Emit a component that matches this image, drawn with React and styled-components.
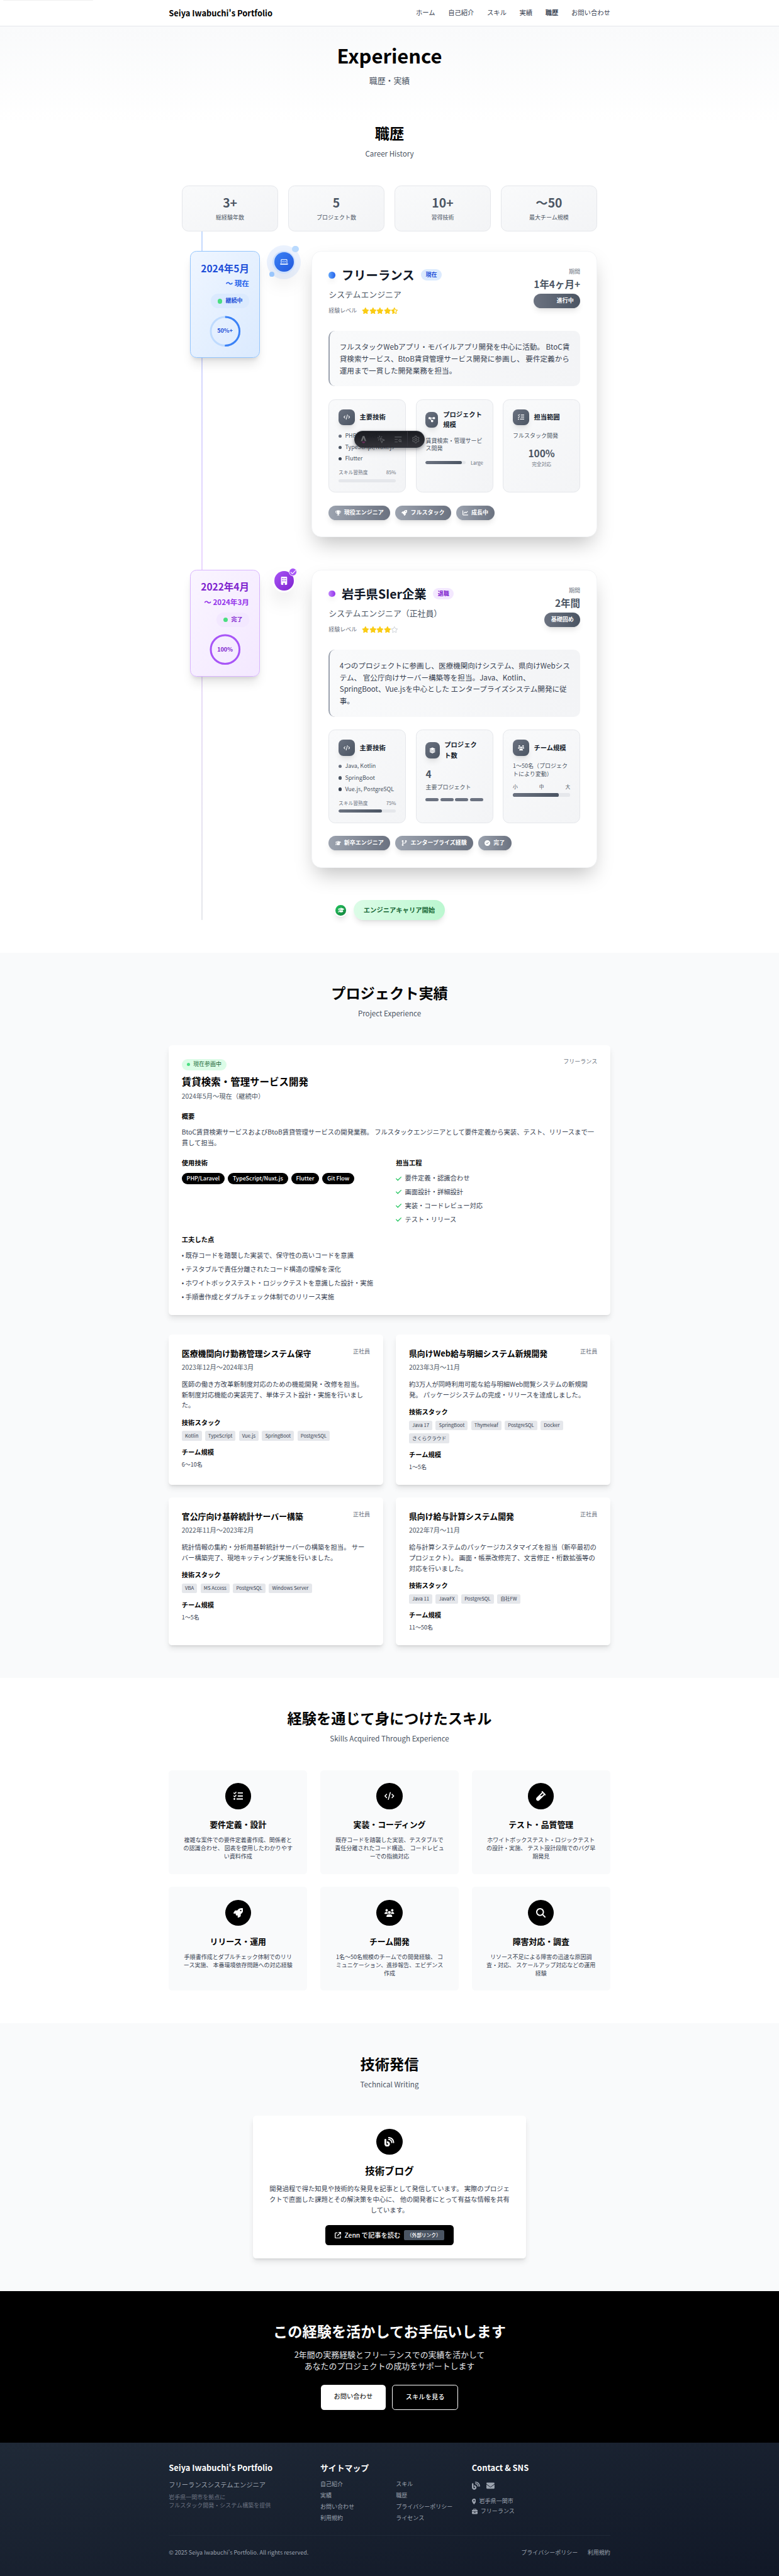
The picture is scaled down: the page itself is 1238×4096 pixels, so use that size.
import React from "react";
import styled, { createGlobalStyle, css } from "styled-components";
import {
  FaArrowUpRightFromSquare,
  FaBlog,
  FaBriefcase,
  FaBuilding,
  FaChartLine,
  FaCheck,
  FaCircleCheck,
  FaCode,
  FaCodeBranch,
  FaDiagramProject,
  FaEnvelope,
  FaGraduationCap,
  FaLaptopCode,
  FaLayerGroup,
  FaListCheck,
  FaLocationDot,
  FaMagnifyingGlass,
  FaRegStar,
  FaRocket,
  FaStar,
  FaStarHalfStroke,
  FaTrophy,
  FaUsers,
  FaVial,
} from "react-icons/fa6";
import { MousePointerClick, Settings, TextSearch } from "lucide-react";

/* 1rem is ten design pixels */
const GlobalStyle = createGlobalStyle`
  *, *::before, *::after { box-sizing: border-box; }
  html { font-size: 6.4482px; }
  body {
    margin: 0;
    background: #fff;
    color: #111827;
    font-family: "Noto Sans CJK JP", "Noto Sans", sans-serif;
    font-size: 1.6rem;
    line-height: 1.625;
    overflow-x: hidden;
  }
  h1, h2, h3, h4, p, ul { margin: 0; padding: 0; }
  ul { list-style: none; }
  svg { display: block; flex-shrink: 0; }
`;

const tones = {
  blue: {
    soft: "#eff6ff", tint: "#dbeafe", edge: "#93c5fd", text: "#1d4ed8", sub: "#2563eb",
    main: "#3b82f6", light: "#60a5fa", deep: "#1d4ed8", track: "#bfdbfe",
  },
  purple: {
    soft: "#faf5ff", tint: "#f3e8ff", edge: "#d8b4fe", text: "#7e22ce", sub: "#9333ea",
    main: "#a855f7", light: "#c084fc", deep: "#7e22ce", track: "#e9d5ff",
  },
};

const shadowMd = "0 0.4rem 0.6rem -0.1rem rgba(0,0,0,.1), 0 0.2rem 0.4rem -0.2rem rgba(0,0,0,.1)";
const shadowLg = "0 1rem 1.5rem -0.3rem rgba(0,0,0,.1), 0 0.4rem 0.6rem -0.4rem rgba(0,0,0,.1)";
const shadowXl = "0 2rem 2.5rem -0.5rem rgba(0,0,0,.1), 0 0.8rem 1rem -0.6rem rgba(0,0,0,.1)";
const shadow2xl = "0 2.5rem 5rem -1.2rem rgba(0,0,0,.25)";

const t12 = css`font-size: 1.2rem; line-height: 1.6rem;`;
const t14 = css`font-size: 1.4rem; line-height: 2rem;`;
const t18 = css`font-size: 1.8rem; line-height: 2.8rem;`;
const t20 = css`font-size: 2rem; line-height: 2.8rem;`;
const t24 = css`font-size: 2.4rem; line-height: 3.2rem;`;
const t30 = css`font-size: 3rem; line-height: 3.6rem;`;

/* ---------- page frame ---------- */
const Page = styled.div`
  position: relative;
  overflow: hidden;
`;
const SkipLinkEdge = styled.div`
  position: absolute;
  left: 0.8rem;
  top: 0;
  width: 22.1rem;
  height: 0.2rem;
  border-radius: 0 0 0.4rem 0.4rem;
  background: #f0f0f0;
  box-shadow: ${shadowMd};
`;
const Container = styled.div`
  width: 115.2rem;
  margin: 0 auto;
  padding: 0 3.2rem;
`;
const Header = styled.header`
  height: 6.5rem;
  border-bottom: 1px solid #e5e7eb;
  background: #fff;
`;
const HeaderRow = styled(Container)`
  height: 6.4rem;
  display: flex;
  align-items: center;
  justify-content: space-between;
`;
const Logo = styled.span`
  ${t20}
  font-weight: 700;
  color: #000;
`;
const Nav = styled.nav`
  display: flex;
  gap: 3.2rem;
`;
const NavLink = styled.span`
  color: #374151;
  font-weight: ${(p) => (p.$active ? 700 : 400)};
`;
const TopArea = styled.div`
  background: linear-gradient(to bottom, #f9fafb 0, #fff 24rem);
`;
const Hero = styled.section`
  height: 16.4rem;
  padding-top: 4.8rem;
  text-align: center;
`;
const HeroTitle = styled.h1`
  font-size: 4.8rem;
  line-height: 1;
  font-weight: 700;
  color: #000;
`;
const HeroSub = styled.p`
  ${t20}
  margin-top: 2.4rem;
  color: #4b5563;
`;
const Section = styled.section`
  height: ${(p) => p.$h};
  padding: 8rem 0;
  background: ${(p) => p.$bg || "transparent"};
`;
const SectionHead = styled.div`
  text-align: center;
  height: 8.4rem;
  margin-bottom: 6.4rem;
`;
const SectionTitle = styled.h2`
  font-size: 3.6rem;
  line-height: 4rem;
  font-weight: 700;
  color: ${(p) => p.$color || "#000"};
`;
const SectionSub = styled.p`
  ${t18}
  margin-top: 1.6rem;
  color: #4b5563;
`;

/* ---------- career ---------- */
const Career = styled.div`
  position: relative;
  width: 102.4rem;
  height: 181.2rem;
  margin: 0 auto;
`;
const TimelineLine = styled.div`
  position: absolute;
  left: 4.8rem;
  top: 0;
  bottom: 0;
  width: 0.4rem;
  border-radius: 0.4rem;
  background: linear-gradient(to bottom, #bfdbfe, #e9d5ff, #e5e7eb);
`;
const StatGrid = styled.div`
  position: relative;
  display: grid;
  grid-template-columns: repeat(4, 1fr);
  gap: 2.4rem;
  margin-bottom: 4.75rem;
`;
const StatCard = styled.div`
  height: 11.4rem;
  padding-top: 2.4rem;
  text-align: center;
  border: 1px solid #e5e7eb;
  border-radius: 1.6rem;
  background: linear-gradient(to bottom right, #f9fafb, #f3f4f6);
`;
const StatValue = styled.div`
  ${t30}
  font-weight: 700;
  color: #4b5563;
`;
const StatLabel = styled.div`
  ${t14}
  margin-top: 0.8rem;
  color: #4b5563;
`;
const Item = styled.article`
  position: relative;
  display: flex;
  align-items: flex-start;
  height: ${(p) => p.$h};
  margin-bottom: 8rem;
`;
const DateCol = styled.div`
  width: 19.2rem;
  display: flex;
  justify-content: flex-end;
`;
const DateCard = styled.div`
  display: flex;
  flex-direction: column;
  align-items: flex-end;
  height: 26.4rem;
  width: 17.1rem;
  padding: calc(2.6rem - 1px);
  border: 1px solid ${(p) => p.$t.edge};
  border-radius: 1.6rem;
  background: linear-gradient(to bottom right, ${(p) => p.$t.soft}, ${(p) => p.$t.tint});
  box-shadow: ${shadowXl};
  white-space: nowrap;
`;
const DateStart = styled.div`
  ${t24}
  font-weight: 700;
  color: ${(p) => p.$t.text};
`;
const DateEnd = styled.div`
  ${t18}
  margin-top: 0.8rem;
  font-weight: 600;
  color: ${(p) => p.$t.sub};
`;
const DateStatus = styled.div`
  ${t14}
  display: flex;
  align-items: center;
  gap: 0.8rem;
  margin-top: 1.2rem;
  padding: 0.8rem 1.6rem;
  border-radius: 2rem;
  font-weight: 700;
  color: ${(p) => p.$t.text};
  background: ${(p) => p.$t.tint};
`;
const GreenDot = styled.i`
  width: ${(p) => p.$size};
  height: ${(p) => p.$size};
  border-radius: 50%;
  background: #4ade80;
`;
const RingBox = styled.div`
  display: grid;
  place-items: center;
  align-self: center;
  width: 8rem;
  height: 8rem;
  margin-top: 1.6rem;
  svg, span { grid-area: 1 / 1; }
  svg { width: 100%; height: 100%; transform: rotate(-90deg); }
`;
const RingText = styled.span`
  ${t14}
  font-weight: 700;
  color: ${(p) => p.$t.text};
`;
const IconCol = styled.div`
  width: 12.8rem;
  padding-left: 3.2rem;
`;
const Marker = styled.div`
  position: relative;
  display: flex;
  align-items: center;
  justify-content: center;
  width: 5.6rem;
  height: 5.6rem;
  border-radius: 50%;
  background: ${(p) => p.$ring};
  box-shadow: ${shadow2xl};
`;
const MarkerCore = styled.div`
  position: relative;
  display: flex;
  align-items: center;
  justify-content: center;
  width: 4.8rem;
  height: 4.8rem;
  border-radius: 50%;
  font-size: 2rem;
  color: ${(p) => p.$ink};
  background: linear-gradient(to bottom right, ${(p) => p.$t.main}, ${(p) => p.$t.deep});
`;
const Halo = styled.div`
  position: absolute;
  inset: -1.4rem;
  border-radius: 50%;
  background: rgba(59, 130, 246, 0.1);
`;
const Orbit = styled.div`
  position: absolute;
  border-radius: 50%;
  width: ${(p) => p.$size};
  height: ${(p) => p.$size};
  ${(p) => p.$place}
`;
const MarkerCheck = styled.div`
  position: absolute;
  right: -0.4rem;
  top: -0.4rem;
  width: 2rem;
  height: 2rem;
  display: flex;
  align-items: center;
  justify-content: center;
  border: 0.2rem solid #fff;
  border-radius: 50%;
  background: #a855f7;
  color: #fff;
  font-size: 1.5rem;
`;
const JobCard = styled.div`
  width: 70.4rem;
  height: 100%;
  padding: calc(4.2rem - 1px);
  border: 1px solid #f3f4f6;
  border-radius: 2.4rem;
  background: #fff;
  box-shadow: ${shadow2xl};
`;
const JobTop = styled.div`
  display: flex;
  justify-content: space-between;
  height: 11.6rem;
`;
const JobTitleRow = styled.div`
  display: flex;
  align-items: center;
  gap: 1.6rem;
`;
const TitleDot = styled.i`
  width: 1.6rem;
  height: 1.6rem;
  border-radius: 50%;
  background: linear-gradient(to right, ${(p) => p.$t.light}, ${(p) => p.$t.sub});
  box-shadow: ${shadowLg};
`;
const JobTitle = styled.h3`
  ${t30}
  font-weight: 700;
  color: #111827;
`;
const JobBadge = styled.span`
  ${t14}
  padding: 0.4rem 1.2rem;
  border-radius: 1.4rem;
  font-weight: 700;
  color: ${(p) => p.$t.text};
  background: ${(p) => p.$t.tint};
`;
const JobRole = styled.p`
  ${t20}
  margin-top: 1.6rem;
  color: #4b5563;
`;
const LevelRow = styled.div`
  ${t14}
  display: flex;
  align-items: center;
  gap: 1.2rem;
  margin-top: 1.6rem;
  color: #6b7280;
`;
const Stars = styled.span`
  display: flex;
  font-size: 1.6rem;
  color: #facc15;
  svg { width: 1.8rem; height: 1.6rem; }
`;
const EmptyStar = styled(FaRegStar)`
  color: #d1d5db;
`;
const Period = styled.div`
  display: flex;
  flex-direction: column;
  text-align: right;
`;
const PeriodLabel = styled.div`
  ${t14}
  color: #6b7280;
`;
const PeriodValue = styled.div`
  ${t24}
  margin-top: 0.4rem;
  font-weight: 700;
  color: #4b5563;
`;
const PeriodPill = styled.div`
  ${t14}
  margin-top: 0.8rem;
  padding: 0.8rem 1.6rem;
  border-radius: 2rem;
  font-weight: 700;
  color: #fff;
  background: linear-gradient(to right, #6b7280, #4b5563);
  box-shadow: ${shadowLg};
`;
const Summary = styled.p`
  margin-top: 4rem;
  padding: 2.4rem;
  border-left: 0.4rem solid #9ca3af;
  border-radius: 1.6rem;
  background: linear-gradient(to right, #f9fafb, #f3f4f6);
  font-size: 1.8rem;
  line-height: 2.925rem;
  color: #374151;
`;
const DetailGrid = styled.div`
  display: grid;
  grid-template-columns: repeat(3, 1fr);
  gap: 2.4rem;
  margin: 3.2rem 0;
`;
const Detail = styled.div`
  min-width: 0;
  height: 23rem;
  padding: calc(2.5rem - 1px) calc(2.45rem - 1px);
  border: 1px solid #e5e7eb;
  border-radius: 1.6rem;
  background: linear-gradient(to bottom right, #f9fafb, #f3f4f6);
`;
const DetailHead = styled.div`
  display: flex;
  align-items: center;
  gap: 1.2rem;
  margin-bottom: 1.6rem;
`;
const DetailIcon = styled.div`
  display: flex;
  align-items: center;
  justify-content: center;
  width: 4rem;
  height: 4rem;
  border-radius: 1.2rem;
  color: #fff;
  font-size: 1.6rem;
  background: linear-gradient(to bottom right, #6b7280, #4b5563);
  box-shadow: ${shadowLg};
`;
const DetailTitle = styled.h4`
  font-size: 1.6rem;
  line-height: 2.6rem;
  font-weight: 700;
  color: #111827;
`;
const BulletList = styled.ul`
  display: flex;
  flex-direction: column;
  gap: 0.8rem;
  margin-bottom: 1.6rem;
`;
const Bullet = styled.li`
  ${t14}
  display: flex;
  align-items: center;
  gap: 0.8rem;
  color: #4b5563;
  white-space: nowrap;
  &::before {
    content: "";
    flex: none;
    width: 0.8rem;
    height: 0.8rem;
    border-radius: 50%;
    background: ${(p) => p.$dot};
  }
`;
const SmallRow = styled.div`
  ${t12}
  display: flex;
  align-items: center;
  justify-content: space-between;
  gap: 1.2rem;
  color: ${(p) => p.$color || "#6b7280"};
`;
const Bar = styled.div`
  flex: 1;
  height: 0.8rem;
  margin-top: ${(p) => (p.$spaced ? "0.8rem" : 0)};
  border-radius: 0.4rem;
  overflow: hidden;
  background: #e5e7eb;
`;
const BarFill = styled.div`
  width: ${(p) => p.$value}%;
  height: 100%;
  border-radius: 0.4rem;
  background: linear-gradient(to right, #6b7280, #4b5563);
`;
const DetailText = styled.p`
  ${t14}
  margin-top: ${(p) => p.$top || 0};
  margin-bottom: ${(p) => p.$gap || "1.6rem"};
  color: #4b5563;
`;
const BigNumber = styled.div`
  ${t24}
  font-weight: 700;
  color: #4b5563;
  text-align: ${(p) => (p.$center ? "center" : "left")};
`;
const BigCaption = styled.div`
  ${t12}
  margin-top: 0.4rem;
  text-align: center;
  color: #6b7280;
`;
const Segments = styled.div`
  display: grid;
  grid-template-columns: repeat(4, 1fr);
  gap: 0.4rem;
  i { height: 0.8rem; border-radius: 0.4rem; background: #6b7280; }
`;
const BadgeRow = styled.div`
  display: flex;
  gap: 1.2rem;
`;
const Badge = styled.span`
  ${t14}
  display: flex;
  align-items: center;
  gap: 0.8rem;
  padding: 0.8rem 1.6rem;
  border-radius: 2rem;
  font-weight: 700;
  color: #fff;
  background: linear-gradient(to right, #9ca3af, #6b7280);
  box-shadow: ${shadowLg};
`;
const StartRow = styled.div`
  position: relative;
  display: flex;
  align-items: center;
  justify-content: center;
  gap: 1.6rem;
`;
const StartIcon = styled.div`
  display: flex;
  align-items: center;
  justify-content: center;
  width: 3.2rem;
  height: 3.2rem;
  border: 0.4rem solid #fff;
  border-radius: 50%;
  background: linear-gradient(to bottom right, #22c55e, #15803d);
  box-shadow: ${shadowLg};
  color: #fff;
  font-size: 1.6rem;
`;
const StartPill = styled.div`
  padding: 1.2rem 2.4rem;
  border-radius: 2.5rem;
  font-weight: 700;
  color: #166534;
  background: linear-gradient(to right, #dcfce7, #bbf7d0);
  box-shadow: ${shadowLg};
`;

/* ---------- floating toolbar ---------- */
const Toolbar = styled.div`
  position: absolute;
  left: 87.3rem;
  top: 106.2rem;
  width: 17.45rem;
  height: 4.2rem;
  display: grid;
  grid-template-columns: repeat(4, 1fr);
  border: 1px solid rgba(52, 56, 65, 0.9);
  border-radius: 2.1rem;
  overflow: hidden;
  color: #5a5c60;
  background: linear-gradient(to bottom, rgba(19, 21, 26, 0.97), rgba(44, 44, 50, 0.97));
`;
const ToolbarShadow = styled.div`
  position: absolute;
  left: 87.3rem;
  top: 106.2rem;
  width: 17.45rem;
  height: 4.2rem;
  border-radius: 2.1rem;
  box-shadow: 0 0.3rem 0.8rem rgba(19, 21, 26, 0.35), 0 0.8rem 1.6rem rgba(19, 21, 26, 0.15);
`;
const ToolCell = styled.div`
  display: flex;
  align-items: center;
  justify-content: center;
  border-left: ${(p) => (p.$split ? "1px solid #36363e" : "0")};
  svg { width: 2.1rem; height: 2.1rem; }
`;

/* ---------- projects ---------- */
const panel = css`
  border-radius: 0.8rem;
  background: #fff;
  box-shadow: ${shadowLg};
`;
const FeaturePanel = styled.article`
  ${panel}
  height: 66.6rem;
  padding: 3.2rem;
  margin-bottom: 4.8rem;
`;
const SplitRow = styled.div`
  display: flex;
  justify-content: space-between;
  align-items: flex-start;
`;
const LiveTag = styled.span`
  ${t14}
  display: inline-flex;
  align-items: center;
  gap: 0.8rem;
  margin: 0.2rem 0 1.2rem;
  padding: 0.4rem 1.2rem;
  border-radius: 1.4rem;
  color: #166534;
  background: #dcfce7;
`;
const Kind = styled.span`
  ${t14}
  color: #6b7280;
  white-space: nowrap;
`;
const FeatureTitle = styled.h3`
  ${t24}
  font-weight: 700;
  color: #000;
`;
const DateText = styled.p`
  margin-top: 0.8rem;
  color: #4b5563;
`;
const SubHead = styled.h4`
  font-size: 1.6rem;
  line-height: 2.6rem;
  font-weight: 700;
  margin: ${(p) => p.$m || "0 0 1.2rem"};
  color: #000;
`;
const BodyText = styled.p`
  color: #374151;
  margin-top: ${(p) => p.$top || 0};
`;
const TwoCol = styled.div`
  display: grid;
  grid-template-columns: 1fr 1fr;
  gap: 3.2rem;
  margin: 2.4rem 0;
`;
const TagRow = styled.div`
  display: flex;
  flex-wrap: wrap;
  gap: 0.8rem;
`;
const DarkTag = styled.span`
  ${t14}
  padding: 0.4rem 1.2rem;
  border-radius: 1.4rem;
  font-weight: 500;
  color: #fff;
  background: #000;
`;
const GrayTag = styled.span`
  ${t12}
  padding: 0.4rem 0.8rem;
  border-radius: 0.4rem;
  color: #374151;
  background: #e5e7eb;
`;
const Lines = styled.ul`
  display: flex;
  flex-direction: column;
  gap: 0.8rem;
  color: #374151;
`;
const CheckLine = styled.li`
  display: flex;
  align-items: center;
  gap: 0.8rem;
  svg { color: #22c55e; width: 1.4rem; height: 1.6rem; }
`;
const ProjectGrid = styled.div`
  display: grid;
  grid-template-columns: 1fr 1fr;
  grid-template-rows: 37rem 36.4rem;
  gap: 3.2rem;
`;
const Project = styled.article`
  ${panel}
  padding: 3.2rem;
`;
const ProjectTitle = styled.h3`
  ${t20}
  font-weight: 700;
  color: #000;
`;
const TeamSize = styled.p`
  ${t14}
  color: #374151;
`;

/* ---------- skills & writing ---------- */
const SkillGrid = styled.div`
  display: grid;
  grid-template-columns: repeat(3, 1fr);
  gap: 3.2rem;
`;
const Skill = styled.div`
  height: 25.6rem;
  padding: 3.2rem;
  border-radius: 0.8rem;
  text-align: center;
  background: #f9fafb;
`;
const RoundIcon = styled.div`
  display: flex;
  align-items: center;
  justify-content: center;
  width: 6.4rem;
  height: 6.4rem;
  margin: 0 auto 2.4rem;
  border-radius: 50%;
  font-size: 2.4rem;
  color: #fff;
  background: #000;
`;
const SkillText = styled.p`
  ${t14}
  margin-top: 1.6rem;
  color: #374151;
`;
const BlogCard = styled.div`
  ${panel}
  display: flex;
  flex-direction: column;
  align-items: center;
  width: 67.2rem;
  height: 35.2rem;
  margin: 0 auto;
  padding: 3.2rem 3.9rem;
  text-align: center;
`;
const BlogButton = styled.div`
  display: flex;
  align-items: center;
  gap: 0.8rem;
  margin-top: 2.4rem;
  padding: 1.2rem 2.4rem;
  border-radius: 0.8rem;
  color: #fff;
  background: #000;
  font-weight: 500;
`;
const ExternalTag = styled.span`
  ${t12}
  padding: 0.4rem 0.8rem;
  border-radius: 0.4rem;
  background: #4b5563;
`;

/* ---------- call to action ---------- */
const Cta = styled.section`
  height: 37.4rem;
  padding: 8rem 0;
  text-align: center;
  background: #000;
`;
const CtaText = styled.p`
  ${t20}
  margin: 2.4rem 0 3.2rem;
  color: #e5e7eb;
`;
const CtaButtons = styled.div`
  display: flex;
  justify-content: center;
  height: 6.2rem;
  gap: 1.6rem;
`;
const CtaButton = styled.div`
  padding: 1.6rem 3.2rem;
  border-radius: 0.8rem;
  font-weight: ${(p) => (p.$outline ? 500 : 400)};
  color: ${(p) => (p.$outline ? "#fff" : "#000")};
  background: ${(p) => (p.$outline ? "transparent" : "#fff")};
  border: ${(p) => (p.$outline ? "0.2rem solid #fff" : "0")};
`;

/* ---------- footer ---------- */
const Footer = styled.footer`
  height: 33rem;
  padding: 4.8rem 0;
  color: #9ca3af;
  background: linear-gradient(to bottom right, #1f2937, #111827);
`;
const FooterGrid = styled.div`
  display: grid;
  grid-template-columns: repeat(3, 1fr);
  gap: 3.2rem;
  height: 18.1rem;
`;
const FooterTitle = styled.h3`
  ${t20}
  margin-bottom: 1.6rem;
  font-weight: 700;
  color: #fff;
`;
const FooterNote = styled.p`
  ${t14}
  margin-top: 0.8rem;
  color: #6b7280;
`;
const LinkGrid = styled.div`
  ${t14}
  display: grid;
  grid-template-columns: 1fr 1fr;
  column-gap: 3.2rem;
  row-gap: 0.8rem;
  padding-top: 0.1rem;
`;
const SocialRow = styled.div`
  display: flex;
  align-items: center;
  gap: 1.6rem;
  height: 2.8rem;
  font-size: 2rem;
`;
const ContactLine = styled.div`
  ${t14}
  display: flex;
  align-items: center;
  gap: 0.8rem;
  margin-top: ${(p) => p.$top};
  svg { height: 1.4rem; width: ${(p) => p.$w}; }
`;
const FooterBottom = styled.div`
  ${t14}
  display: flex;
  justify-content: space-between;
  padding-top: 3.2rem;
  border-top: 1px solid #1f2937;
`;
const LegalLinks = styled.div`
  display: flex;
  gap: 2.4rem;
`;

/* ---------- data ---------- */
const stats = [
  ["3+", "総経験年数"],
  ["5", "プロジェクト数"],
  ["10+", "習得技術"],
  ["〜50", "最大チーム規模"],
];

const projects = [
  {
    title: "医療機関向け勤務管理システム保守",
    date: "2023年12月〜2024年3月",
    text: "医師の働き方改革新制度対応のための機能開発・改修を担当。 新制度対応機能の実装完了、単体テスト設計・実施を行いました。",
    tags: ["Kotlin", "TypeScript", "Vue.js", "SpringBoot", "PostgreSQL"],
    team: "6〜10名",
  },
  {
    title: "県向けWeb給与明細システム新規開発",
    date: "2023年3月〜11月",
    text: "約3万人が同時利用可能な給与明細Web閲覧システムの新規開発。 パッケージシステムの完成・リリースを達成しました。",
    tags: ["Java 17", "SpringBoot", "Thymeleaf", "PostgreSQL", "Docker", "さくらクラウド"],
    team: "1〜5名",
  },
  {
    title: "官公庁向け基幹統計サーバー構築",
    date: "2022年11月〜2023年2月",
    text: "統計情報の集約・分析用基幹統計サーバーの構築を担当。 サーバー構築完了、現地キッティング実施を行いました。",
    tags: ["VBA", "MS Access", "PostgreSQL", "Windows Server"],
    team: "1〜5名",
  },
  {
    title: "県向け給与計算システム開発",
    date: "2022年7月〜11月",
    text: "給与計算システムのパッケージカスタマイズを担当（新卒最初のプロジェクト）。 画面・帳票改修完了、文言修正・桁数拡張等の対応を行いました。",
    tags: ["Java 11", "JavaFX", "PostgreSQL", "自社FW"],
    team: "11〜50名",
  },
];

const skills = [
  [FaListCheck, "要件定義・設計", "複雑な案件での要件定義書作成、関係者との認識合わせ、 図表を使用したわかりやすい資料作成"],
  [FaCode, "実装・コーディング", "既存コードを踏襲した実装、テスタブルで責任分離されたコード構造、 コードレビューでの指摘対応"],
  [FaVial, "テスト・品質管理", "ホワイトボックステスト・ロジックテストの設計・実施、 テスト設計段階でのバグ早期発見"],
  [FaRocket, "リリース・運用", "手順書作成とダブルチェック体制でのリリース実施、 本番環境依存問題への対応経験"],
  [FaUsers, "チーム開発", "1名〜50名規模のチームでの開発経験、 コミュニケーション、進捗報告、エビデンス作成"],
  [FaMagnifyingGlass, "障害対応・調査", "リソース不足による障害の迅速な原因調査・対応、 スケールアップ対応などの運用経験"],
];

/* ---------- pieces ---------- */
function Ring({ tone, value, label }) {
  return (
    <RingBox>
      <svg viewBox="0 0 36 36" fill="none" strokeWidth="2.1">
        <circle cx="18" cy="18" r="15.9155" stroke={tone.track} />
        <circle cx="18" cy="18" r="15.9155" stroke={tone.main} strokeDasharray={`${value} 100`} />
      </svg>
      <RingText $t={tone}>{label}</RingText>
    </RingBox>
  );
}

function Head({ icon: Icon, children }) {
  return (
    <DetailHead>
      <DetailIcon><Icon /></DetailIcon>
      <DetailTitle>{children}</DetailTitle>
    </DetailHead>
  );
}

function TechDetail({ items, level, fill }) {
  const dots = ["#6b7280", "#4b5563", "#374151"];
  return (
    <Detail>
      <Head icon={FaCode}>主要技術</Head>
      <BulletList>
        {items.map((x, i) => <Bullet key={x} $dot={dots[i]}>{x}</Bullet>)}
      </BulletList>
      <SmallRow><span>スキル習熟度</span><span>{level}%</span></SmallRow>
      <Bar $spaced><BarFill $value={fill} /></Bar>
    </Detail>
  );
}

function Job({ height, tone, start, end, status, ring, marker, title, badge, role, lastStar: LastStar, period, phase, summary, details, badges }) {
  return (
    <Item $h={height}>
      <DateCol>
        <DateCard $t={tone}>
          <DateStart $t={tone}>{start}</DateStart>
          <DateEnd $t={tone}>{end}</DateEnd>
          <DateStatus $t={tone}><GreenDot $size="1.2rem" />{status}</DateStatus>
          <Ring tone={tone} {...ring} />
        </DateCard>
      </DateCol>
      <IconCol>{marker}</IconCol>
      <JobCard>
        <JobTop>
          <div>
            <JobTitleRow>
              <TitleDot $t={tone} />
              <JobTitle>{title}</JobTitle>
              <JobBadge $t={tone}>{badge}</JobBadge>
            </JobTitleRow>
            <JobRole>{role}</JobRole>
            <LevelRow>
              経験レベル
              <Stars><FaStar /><FaStar /><FaStar /><FaStar /><LastStar /></Stars>
            </LevelRow>
          </div>
          <Period>
            <PeriodLabel>期間</PeriodLabel>
            <PeriodValue>{period}</PeriodValue>
            <PeriodPill>{phase}</PeriodPill>
          </Period>
        </JobTop>
        <Summary>{summary}</Summary>
        <DetailGrid>{details}</DetailGrid>
        <BadgeRow>
          {badges.map(([Icon, text]) => <Badge key={text}><Icon />{text}</Badge>)}
        </BadgeRow>
      </JobCard>
    </Item>
  );
}

function DevToolbar() {
  return (
    <>
      <ToolbarShadow />
      <Toolbar>
        <ToolCell>
          <svg viewBox="0 0 24 24">
            <path fill="#6b6d70" d="M9.6 2h4.8l5.4 15.4a21 21 0 0 0-5-1.6L12 7.2 9.2 15.8a21 21 0 0 0-5 1.6L9.6 2Z" />
            <path fill="#6d2f5e" d="M7.6 17.4c2.800 1.200 6 1.200 8.800 0 .3 1.900-.5 3.100-1.900 3.900-.8.500-1.500 1-1.700 2.200-1.100-.6-1.200-1.700-.9-2.600-.9.400-1 1-.9 1.700-1.900-.8-3.500-2.700-3.400-5.200Z" />
          </svg>
        </ToolCell>
        <ToolCell><MousePointerClick /></ToolCell>
        <ToolCell><TextSearch /></ToolCell>
        <ToolCell $split><Settings /></ToolCell>
      </Toolbar>
    </>
  );
}

function Heading({ title, sub }) {
  return (
    <SectionHead>
      <SectionTitle>{title}</SectionTitle>
      <SectionSub>{sub}</SectionSub>
    </SectionHead>
  );
}

export default function App() {
  const { blue, purple } = tones;
  return (
    <Page lang="ja">
      <GlobalStyle />
      <Header>
        <HeaderRow>
          <Logo>Seiya Iwabuchi's Portfolio</Logo>
          <Nav>
            {["ホーム", "自己紹介", "スキル", "実績", "職歴", "お問い合わせ"].map((x) => (
              <NavLink key={x} $active={x === "職歴"}>{x}</NavLink>
            ))}
          </Nav>
        </HeaderRow>
      </Header>

      <TopArea>
        <Hero>
          <HeroTitle>Experience</HeroTitle>
          <HeroSub>職歴・実績</HeroSub>
        </Hero>

        <Section $h="212rem">
          <Heading title="職歴" sub="Career History" />
          <Career>
            <TimelineLine />
            <StatGrid>
              {stats.map(([v, l]) => (
                <StatCard key={l}><StatValue>{v}</StatValue><StatLabel>{l}</StatLabel></StatCard>
              ))}
            </StatGrid>

            <Job
              height="70.6rem"
              tone={blue}
              start="2024年5月"
              end="〜 現在"
              status="継続中"
              ring={{ value: 50, label: "50%+" }}
              marker={
                <Marker $ring="#deebfd">
                  <Halo />
                  <MarkerCore $t={{ main: "#3b82f6", deep: "#2158dc" }} $ink="#dbe8fd"><FaLaptopCode /></MarkerCore>
                  <Orbit $size="1.6rem" $place="right:-0.8rem;top:-1.2rem;background:#badafe;" />
                  <Orbit $size="1.2rem" $place="left:-0.8rem;bottom:-0.8rem;background:#9ac6fc;" />
                </Marker>
              }
              title="フリーランス"
              badge="現在"
              role="システムエンジニア"
              lastStar={FaStarHalfStroke}
              period="1年4ヶ月+"
              phase="進行中"
              summary="フルスタックWebアプリ・モバイルアプリ開発を中心に活動。 BtoC賃貸検索サービス、BtoB賃貸管理サービス開発に参画し、 要件定義から運用まで一貫した開発業務を担当。"
              details={
                <>
                  <TechDetail items={["PHP/Laravel", "TypeScript/Nuxt.js", "Flutter"]} level={85} fill={0} />
                  <Detail>
                    <Head icon={FaDiagramProject}>プロジェクト規模</Head>
                    <DetailText>賃貸検索・管理サービス開発</DetailText>
                    <SmallRow><Bar><BarFill $value={90} /></Bar><span>Large</span></SmallRow>
                  </Detail>
                  <Detail>
                    <Head icon={FaListCheck}>担当範囲</Head>
                    <DetailText>フルスタック開発</DetailText>
                    <BigNumber $center>100%</BigNumber>
                    <BigCaption>完全対応</BigCaption>
                  </Detail>
                </>
              }
              badges={[[FaTrophy, "現役エンジニア"], [FaRocket, "フルスタック"], [FaChartLine, "成長中"]]}
            />

            <Job
              height="73.5rem"
              tone={purple}
              start="2022年4月"
              end="〜 2024年3月"
              status="完了"
              ring={{ value: 100, label: "100%" }}
              marker={
                <Marker $ring="#fff">
                  <MarkerCore $t={purple} $ink="#fff"><FaBuilding /></MarkerCore>
                  <MarkerCheck><FaCheck /></MarkerCheck>
                </Marker>
              }
              title="岩手県SIer企業"
              badge="退職"
              role="システムエンジニア（正社員）"
              lastStar={EmptyStar}
              period="2年間"
              phase="基礎固め"
              summary="4つのプロジェクトに参画し、医療機関向けシステム、県向けWebシステム、 官公庁向けサーバー構築等を担当。Java、Kotlin、SpringBoot、Vue.jsを中心とした エンタープライズシステム開発に従事。"
              details={
                <>
                  <TechDetail items={["Java, Kotlin", "SpringBoot", "Vue.js, PostgreSQL"]} level={75} fill={75} />
                  <Detail>
                    <Head icon={FaLayerGroup}>プロジェクト数</Head>
                    <BigNumber>4</BigNumber>
                    <DetailText $top="0.8rem">主要プロジェクト</DetailText>
                    <Segments><i /><i /><i /><i /></Segments>
                  </Detail>
                  <Detail>
                    <Head icon={FaUsers}>チーム規模</Head>
                    <DetailText $gap="1.2rem">1〜50名（プロジェクトにより変動）</DetailText>
                    <SmallRow $color="#4b5563"><span>小</span><span>中</span><span>大</span></SmallRow>
                    <Bar $spaced><BarFill $value={80} /></Bar>
                  </Detail>
                </>
              }
              badges={[[FaGraduationCap, "新卒エンジニア"], [FaCodeBranch, "エンタープライズ経験"], [FaCircleCheck, "完了"]]}
            />

            <StartRow>
              <StartIcon><FaGraduationCap /></StartIcon>
              <StartPill>エンジニアキャリア開始</StartPill>
            </StartRow>
          </Career>
        </Section>
      </TopArea>

      <Section $h="178.8rem" $bg="#f9fafb">
        <Container>
          <Heading title="プロジェクト実績" sub="Project Experience" />
          <FeaturePanel>
            <SplitRow>
              <LiveTag><GreenDot $size="0.8rem" />現在参画中</LiveTag>
              <Kind>フリーランス</Kind>
            </SplitRow>
            <FeatureTitle>賃貸検索・管理サービス開発</FeatureTitle>
            <DateText>2024年5月〜現在（継続中）</DateText>
            <SubHead $m="2.4rem 0 1.2rem">概要</SubHead>
            <BodyText>
              BtoC賃貸検索サービスおよびBtoB賃貸管理サービスの開発業務。 フルスタックエンジニアとして要件定義から実装、テスト、リリースまで一貫して担当。
            </BodyText>
            <TwoCol>
              <div>
                <SubHead>使用技術</SubHead>
                <TagRow>
                  {["PHP/Laravel", "TypeScript/Nuxt.js", "Flutter", "Git Flow"].map((x) => <DarkTag key={x}>{x}</DarkTag>)}
                </TagRow>
              </div>
              <div>
                <SubHead>担当工程</SubHead>
                <Lines>
                  {["要件定義・認識合わせ", "画面設計・詳細設計", "実装・コードレビュー対応", "テスト・リリース"].map((x) => (
                    <CheckLine key={x}><FaCheck />{x}</CheckLine>
                  ))}
                </Lines>
              </div>
            </TwoCol>
            <SubHead>工夫した点</SubHead>
            <Lines>
              <li>• 既存コードを踏襲した実装で、保守性の高いコードを意識</li>
              <li>• テスタブルで責任分離されたコード構造の理解を深化</li>
              <li>• ホワイトボックステスト・ロジックテストを意識した設計・実施</li>
              <li>• 手順書作成とダブルチェック体制でのリリース実施</li>
            </Lines>
          </FeaturePanel>

          <ProjectGrid>
            {projects.map((p) => (
              <Project key={p.title}>
                <SplitRow>
                  <ProjectTitle>{p.title}</ProjectTitle>
                  <Kind>正社員</Kind>
                </SplitRow>
                <DateText>{p.date}</DateText>
                <BodyText $top="1.6rem">{p.text}</BodyText>
                <SubHead $m="1.6rem 0 0.8rem">技術スタック</SubHead>
                <TagRow>{p.tags.map((x) => <GrayTag key={x}>{x}</GrayTag>)}</TagRow>
                <SubHead $m="1.6rem 0 0.8rem">チーム規模</SubHead>
                <TeamSize>{p.team}</TeamSize>
              </Project>
            ))}
          </ProjectGrid>
        </Container>
      </Section>

      <Section $h="85.2rem">
        <Container>
          <Heading title="経験を通じて身につけたスキル" sub="Skills Acquired Through Experience" />
          <SkillGrid>
            {skills.map(([Icon, title, text]) => (
              <Skill key={title}>
                <RoundIcon><Icon /></RoundIcon>
                <ProjectTitle>{title}</ProjectTitle>
                <SkillText>{text}</SkillText>
              </Skill>
            ))}
          </SkillGrid>
        </Container>
      </Section>

      <Section $h="66rem" $bg="#f9fafb">
        <Heading title="技術発信" sub="Technical Writing" />
        <BlogCard>
          <RoundIcon><FaBlog /></RoundIcon>
          <FeatureTitle>技術ブログ</FeatureTitle>
          <BodyText $top="1.6rem">
            開発過程で得た知見や技術的な発見を記事として発信しています。 実際のプロジェクトで直面した課題とその解決策を中心に、 他の開発者にとって有益な情報を共有しています。
          </BodyText>
          <BlogButton>
            <FaArrowUpRightFromSquare />
            Zenn で記事を読む
            <ExternalTag>（外部リンク）</ExternalTag>
          </BlogButton>
        </BlogCard>
      </Section>

      <Cta>
        <SectionTitle $color="#fff">この経験を活かしてお手伝いします</SectionTitle>
        <CtaText>
          2年間の実務経験とフリーランスでの実績を活かして
          <br />
          あなたのプロジェクトの成功をサポートします
        </CtaText>
        <CtaButtons>
          <CtaButton>お問い合わせ</CtaButton>
          <CtaButton $outline>スキルを見る</CtaButton>
        </CtaButtons>
      </Cta>

      <Footer>
        <Container>
          <FooterGrid>
            <div>
              <FooterTitle>Seiya Iwabuchi's Portfolio</FooterTitle>
              <p>フリーランスシステムエンジニア</p>
              <FooterNote>
                岩手県一関市を拠点に
                <br />
                フルスタック開発・システム構築を提供
              </FooterNote>
            </div>
            <div>
              <FooterTitle>サイトマップ</FooterTitle>
              <LinkGrid>
                {["自己紹介", "スキル", "実績", "職歴", "お問い合わせ", "プライバシーポリシー", "利用規約", "ライセンス"].map((x) => (
                  <span key={x}>{x}</span>
                ))}
              </LinkGrid>
            </div>
            <div>
              <FooterTitle>Contact & SNS</FooterTitle>
              <SocialRow><FaBlog /><FaEnvelope /></SocialRow>
              <ContactLine $top="1.6rem" $w="1.05rem"><FaLocationDot />岩手県一関市</ContactLine>
              <ContactLine $top="0.4rem" $w="1.4rem"><FaBriefcase />フリーランス</ContactLine>
            </div>
          </FooterGrid>
          <FooterBottom>
            <span>© 2025 Seiya Iwabuchi's Portfolio. All rights reserved.</span>
            <LegalLinks><span>プライバシーポリシー</span><span>利用規約</span></LegalLinks>
          </FooterBottom>
        </Container>
      </Footer>

      <SkipLinkEdge />
      <DevToolbar />
    </Page>
  );
}
